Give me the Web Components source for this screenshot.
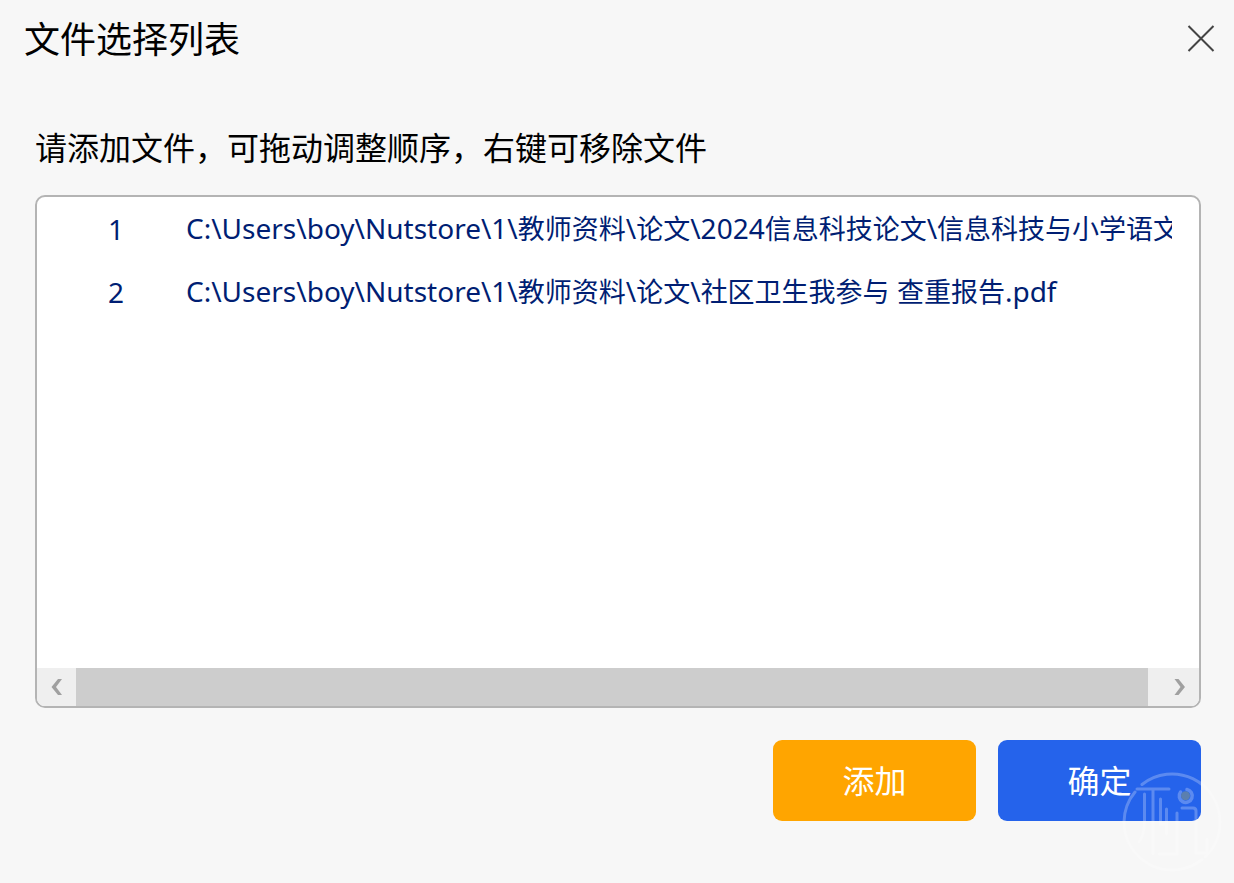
<!DOCTYPE html>
<html lang="zh-CN">
<head>
<meta charset="utf-8">
<title>文件选择列表</title>
<style>
  html, body { height: 100%; margin: 0; }
  body {
    background: #f7f7f7;
    color: #000;
    font-family: "Noto Sans", "Noto Sans CJK SC", sans-serif;
  }
</style>
</head>
<body>
<file-dialog>
  <dialog-header slot="header">文件选择列表</dialog-header>
  <span slot="hint">请添加文件，可拖动调整顺序，右键可移除文件</span>
  <file-list>
    <file-row index="1">C:\Users\boy\Nutstore\1\教师资料\论文\2024信息科技论文\信息科技与小学语文</file-row>
    <file-row index="2">C:\Users\boy\Nutstore\1\教师资料\论文\社区卫生我参与 查重报告.pdf</file-row>
  </file-list>
  <action-button slot="actions" tone="add">添加</action-button>
  <action-button slot="actions" tone="confirm">确定</action-button>
  <corner-mark slot="mark"></corner-mark>
</file-dialog>

<script>
  const define = (name, html, setup) => {
    const template = document.createElement('template');
    template.innerHTML = html;
    customElements.define(name, class extends HTMLElement {
      constructor() {
        super();
        this.attachShadow({ mode: 'open' }).append(template.content.cloneNode(true));
      }
      connectedCallback() { if (setup) setup(this, this.shadowRoot); }
    });
  };

  define('file-dialog', `
    <style>
      :host { display: flex; flex-direction: column; position: relative; box-sizing: border-box; min-height: 100vh; overflow: hidden; }
      main { flex: 1; display: flex; flex-direction: column; padding: 44px 33px 62px 35px; }
      p { margin: 0 0 25px; font: 400 32px/48px "Noto Sans CJK SC", sans-serif; }
      footer { display: flex; justify-content: flex-end; gap: 22px; margin-top: 32px; }
    </style>
    <slot name="header"></slot>
    <main>
      <p><slot name="hint"></slot></p>
      <slot></slot>
      <footer><slot name="actions"></slot></footer>
    </main>
    <slot name="mark"></slot>`);

  define('dialog-header', `
    <style>
      :host { display: flex; justify-content: space-between; align-items: center; height: 78px; padding: 0 16px 0 24px; }
      h1 { margin: 0; padding-bottom: 4px; font: 400 36px/48px "Noto Sans CJK SC", sans-serif; }
      button { display: flex; border: 0; padding: 0; background: none; cursor: pointer; }
      svg { width: 34px; height: 34px; }
    </style>
    <h1><slot></slot></h1>
    <button type="button" aria-label="关闭">
      <svg viewBox="0 0 34 34" fill="none" stroke="#444" stroke-width="2"><path d="M4.5 4L29.500 29M29.500 4L4.500 29"/></svg>
    </button>`);

  define('file-list', `
    <style>
      :host { flex: 1; display: flex; flex-direction: column; box-sizing: border-box; background: #fff; border: 2px solid #b4b4b4; border-radius: 10px; overflow: hidden; }
      .rows { flex: 1; }
      .bar { display: flex; height: 38px; background: #efefef; }
      .thumb { flex: 1; background: #cdcdcd; }
      button { display: flex; align-items: center; justify-content: center; width: 39px; border: 0; padding: 0; background: #efefef; }
      .next { width: 51px; padding-left: 12px; }
      svg { width: 12px; height: 18px; }
    </style>
    <div class="rows" role="list"><slot></slot></div>
    <div class="bar">
      <button type="button" aria-label="向左滚动"><svg viewBox="0 0 12 18" fill="#a0a0a0"><path d="M7 1H11L5 9L11 17H7L0.500 9Z"/></svg></button>
      <div class="thumb"></div>
      <button type="button" class="next" aria-label="向右滚动"><svg viewBox="0 0 12 18" fill="#a0a0a0"><path d="M4.500 1H0.500L6.500 9L0.500 17H4.500L11 9Z"/></svg></button>
    </div>`);

  define('file-row', `
    <style>
      :host { display: flex; align-items: center; height: 63px; padding: 0 27px 0 71px; color: #001e73; font-size: 28px; line-height: 40px; }
      .index { flex: none; width: 78px; }
      .path { flex: 1; min-width: 0; overflow: hidden; white-space: nowrap; }
      .han { font-size: 27px; }
    </style>
    <span class="index"></span>
    <span class="path"></span>`,
    (host, root) => {
      host.setAttribute('role', 'listitem');
      root.querySelector('.index').textContent = host.getAttribute('index');
      // Han runs are set one size below the Latin ones so both look equally large.
      const runs = host.textContent.match(/[\u4e00-\u9fff]+|[^\u4e00-\u9fff]+/g) || [];
      root.querySelector('.path').replaceChildren(...runs.map(run => {
        const span = document.createElement('span');
        if (/[\u4e00-\u9fff]/.test(run)) span.className = 'han';
        span.textContent = run;
        return span;
      }));
    });

  define('action-button', `
    <style>
      :host { display: block; --tone: #ffa500; }
      :host([tone="confirm"]) { --tone: #2563eb; }
      button { display: block; width: 203px; height: 81px; border: 0; border-radius: 9px; padding: 0 0 4px; background: var(--tone); color: #fff; font: 400 32px/48px "Noto Sans CJK SC", sans-serif; cursor: pointer; }
    </style>
    <button type="button"><slot></slot></button>`);

  define('corner-mark', `
    <style>
      :host { position: absolute; right: 12px; bottom: 11px; width: 100px; height: 100px; pointer-events: none; }
      svg { display: block; width: 100px; height: 100px; }
    </style>
    <svg viewBox="0 0 100 100" fill="none" stroke-linecap="round" aria-hidden="true">
      <g stroke="#fff" stroke-width="3" opacity=".25">
        <path d="M20 12.500A48 48 0 0 1 98 50A48 48 0 0 1 83 85M80 87.500A48 48 0 0 1 2 50A48 48 0 0 1 13 20"/>
        <path d="M15 17H47M22.500 22V50Q22 64 17 70M31 18V82M38.500 27V52H44.500M44.500 37V62M37 82H55V41M60 36H71Q74 36 74 39V81H83Q85 81 85 79V67"/>
        <path d="M58.500 20A6.500 6.500 0 1 0 65 17.500" stroke-width="3.500"/>
      </g>
      <circle cx="63.500" cy="23.800" r="4.500" fill="#5b7fae"/>
    </svg>`);
</script>
</body>
</html>
